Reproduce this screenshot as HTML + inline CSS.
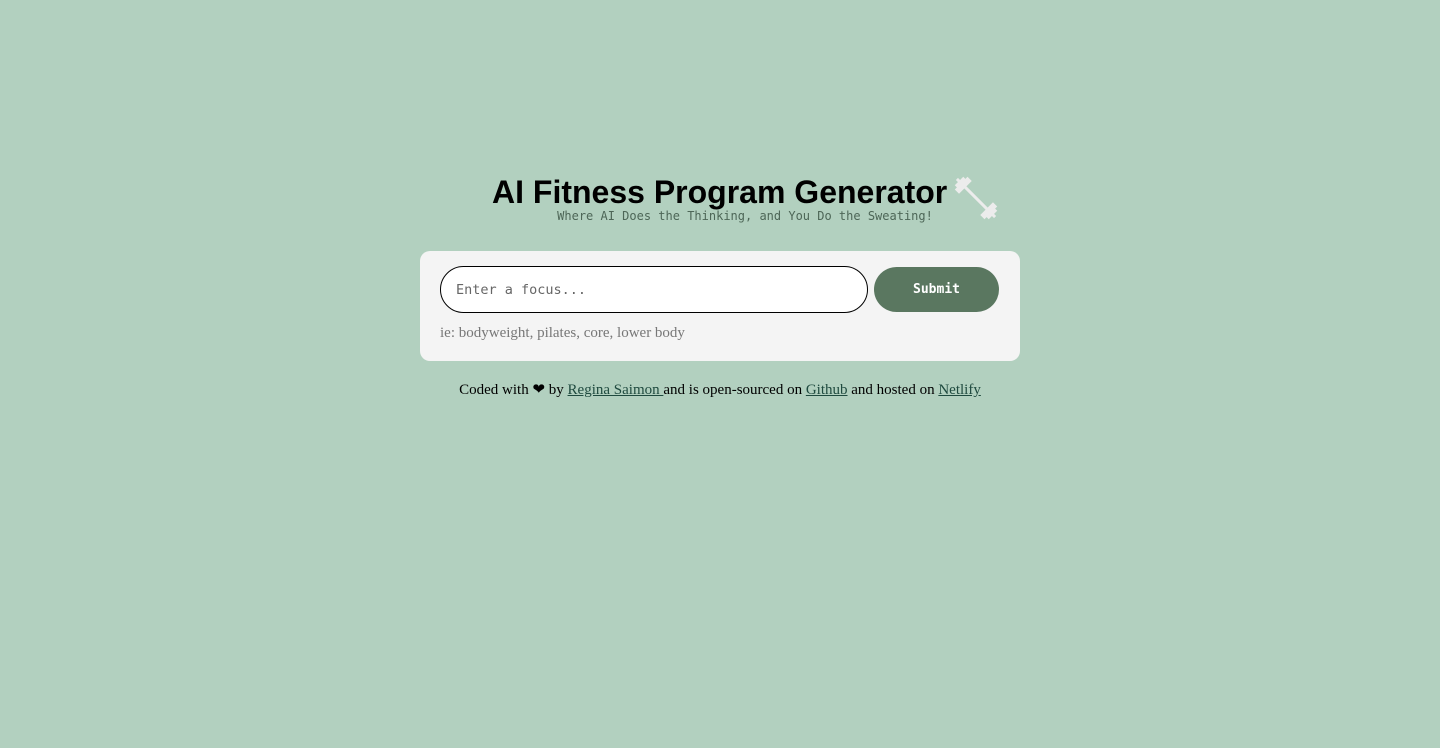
<!DOCTYPE html>
<html><head><style>
body{margin:0;background:#b2d0bf;width:1440px;height:748px;overflow:hidden;position:relative;}
h1{position:absolute;left:492px;top:172px;margin:0;font:bold 32px "Liberation Sans",sans-serif;color:#000;white-space:nowrap;line-height:40px;}
.sub{position:absolute;left:0;width:1490px;text-align:center;top:209px;font:12px "DejaVu Sans Mono","Liberation Mono",monospace;color:#4d6657;}
.icon{position:absolute;left:953px;top:175px;}
.card{position:absolute;left:420px;top:251px;width:600px;height:110px;background:#f4f4f4;border-radius:10px;}
.inp{position:absolute;left:20px;top:15px;width:426px;height:45px;border:1px solid #000;border-radius:24px;background:#fff;box-sizing:content-box;}
.inp span{position:absolute;left:15px;top:15px;font:13.5px "DejaVu Sans Mono","Liberation Mono",monospace;color:#666;}
.btn{position:absolute;left:454px;top:16px;width:125px;height:45px;background:#5a7760;border-radius:23px;color:#fff;font:bold 13px "DejaVu Sans Mono","Liberation Mono",monospace;text-align:center;line-height:46px;}
.hint{position:absolute;left:20px;top:74px;font:15px "Liberation Serif",serif;color:#777;}
.foot{position:absolute;left:0;width:1440px;text-align:center;top:380px;font:15px "Liberation Serif",serif;color:#000;}
.foot a{color:#1f4a3f;text-decoration:underline;}
</style></head><body>
<h1>AI Fitness Program Generator</h1>
<div class="sub">Where AI Does the Thinking, and You Do the Sweating!</div>
<svg class="icon" width="46" height="46" viewBox="0 0 46 46">
<g transform="rotate(45 23 23)" fill="#ececec">
<rect x="-4" y="21.5" width="54" height="3"/>
<rect x="2" y="14" width="6" height="18"/>
<rect x="-1" y="17" width="4" height="12"/>
<rect x="38" y="14" width="6" height="18"/>
<rect x="43" y="17" width="4" height="12"/>
</g></svg>
<div class="card">
<div class="inp"><span>Enter a focus...</span></div>
<div class="btn">Submit</div>
<div class="hint">ie: bodyweight, pilates, core, lower body</div>
</div>
<div class="foot">Coded with ❤ by <a>Regina Saimon </a>and is open-sourced on <a>Github</a> and hosted on <a>Netlify</a></div>
</body></html>
